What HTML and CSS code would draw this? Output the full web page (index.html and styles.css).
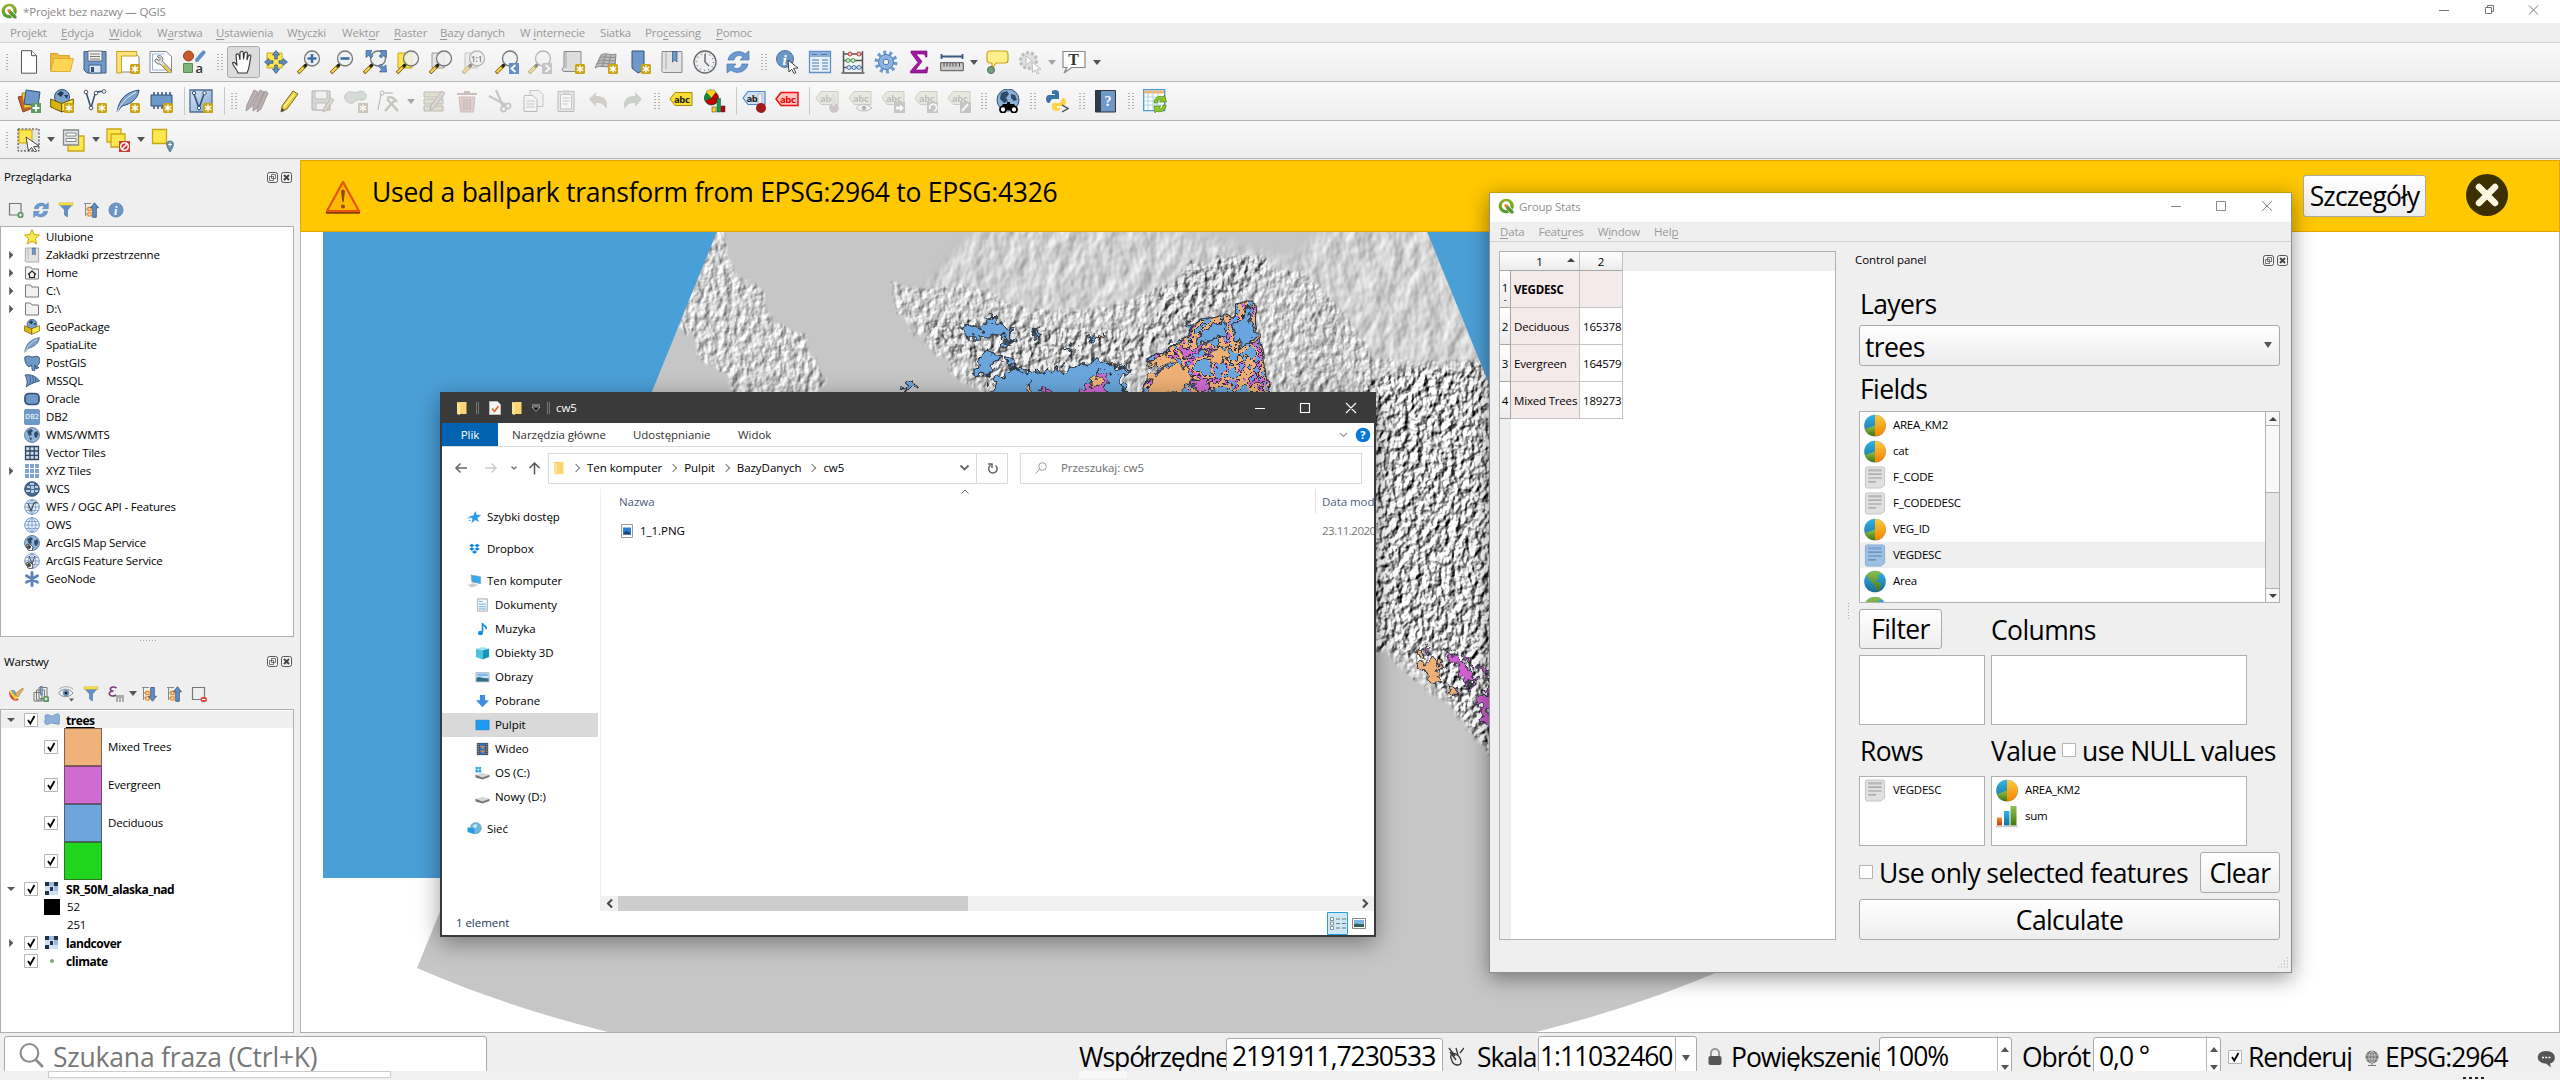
FILE: index.html
```html
<!DOCTYPE html>
<html lang="pl">
<head>
<meta charset="utf-8">
<title>*Projekt bez nazwy — QGIS</title>
<link rel="stylesheet" href="styles.css">
</head>
<body>
<svg class="defs" width="0" height="0" aria-hidden="true">
<defs>
<linearGradient id="gq" x1="0" y1="0" x2="0" y2="1"><stop offset="0" stop-color="#93b023"/><stop offset="1" stop-color="#4f9a2e"/></linearGradient>
<linearGradient id="gblue" x1="0" y1="0" x2="0" y2="1"><stop offset="0" stop-color="#31b5e6"/><stop offset="1" stop-color="#176b98"/></linearGradient>
<linearGradient id="gor" x1="0" y1="0" x2="0" y2="1"><stop offset="0" stop-color="#fccb3c"/><stop offset="1" stop-color="#f58200"/></linearGradient>
<linearGradient id="ggr" x1="0" y1="0" x2="0" y2="1"><stop offset="0" stop-color="#8ec04f"/><stop offset="1" stop-color="#45760f"/></linearGradient>
<linearGradient id="gred" x1="0" y1="0" x2="0" y2="1"><stop offset="0" stop-color="#f7902a"/><stop offset="1" stop-color="#c9370f"/></linearGradient>
<linearGradient id="gv" x1="0" y1="0" x2="1" y2="1"><stop offset="0" stop-color="#dbe7f4"/><stop offset="1" stop-color="#7fa5d2"/></linearGradient>

<g id="star"><rect x="14" y="14" width="10" height="10" rx="1.5" fill="#c9a514"/><path d="M19 15.500v7M15.800 17.200l6.400 3.600M22.200 17.200l-6.400 3.600" stroke="#fff" stroke-width="1.400"/></g>
<g id="lens"><path d="M1 23l8-8" stroke="#6b5300" stroke-width="3.600"/><path d="M1.600 22.400l5-5" stroke="#f6cf4a" stroke-width="2.200"/><path d="M7.500 16.500l3-3" stroke="#222" stroke-width="2.500"/><circle cx="15" cy="8.500" r="7.500" fill="#edf1ee" fill-opacity=".85" stroke="#777" stroke-width="1.300"/></g>
<g id="pencil"><path d="M15 2l5 3L9 20l-6 3 1-6z" fill="#e7cf3b" stroke="#7a6a18" stroke-width="1"/><path d="M17 4L6 18" stroke="#fff3a0" stroke-width="1.300"/><path d="M3 23l1-4 2.500 2z" fill="#444"/></g>
<g id="tag"><path d="M1 9l5-6.500h17v13H6z" /></g>
<g id="globe16"><circle cx="8" cy="8" r="7.500" fill="#8fb3d9" stroke="#4d6f96" stroke-width=".8"/><path d="M3 4l4-2 2 2-2 2 1 2-3 1zM10 6l3-2 1.500 3-2 4-2-1zM5 10l3 1-1 3z" fill="#2f4a6b"/></g>
<g id="grid16"><circle cx="8" cy="8" r="7.300" fill="#e8f0fa" stroke="#6e97c6" stroke-width="1"/><path d="M8 .7v14.600M.7 8h14.600M2 4.500h12M2 11.500h12M8 .7C3 5 3 11 8 15.300M8 .7c5 4.300 5 10.300 0 14.600" fill="none" stroke="#6e97c6" stroke-width=".8"/></g>

<symbol id="q" viewBox="0 0 16 16"><path d="M8 .8a7.200 7.200 0 1 0 3.200 13.600l-2.300-2.600A4.300 4.300 0 1 1 12.200 8.800l2.600 2.700A7.200 7.200 0 0 0 8 .8z" fill="url(#gq)"/><path d="M8 8l2.200-.3 5.300 5.400V15.500h-2.600L7.700 10z" fill="#589632"/><path d="M6.500 6.200l3 .3.500 1.500-2 1.500-1.500-1z" fill="#ee7913"/></symbol>
<symbol id="new" viewBox="0 0 24 24"><path d="M4.500 .7h10l5 5v17.500h-15z" fill="#fff" stroke="#555"/><path d="M14.500 .7v5h5" fill="#eee" stroke="#555"/></symbol>
<symbol id="open" viewBox="0 0 24 24"><path d="M.5 21V3.500h7l2 2h10V8" fill="#f3b938" stroke="#d8a32f"/><path d="M.7 21.500L4 8.500h19.500l-3.300 13z" fill="#fcd653" stroke="#dfae38"/></symbol>
<symbol id="save" viewBox="0 0 24 24"><path d="M1 1.500h22v21.500H4l-3-3z" fill="#6d98c8" stroke="#3d5f8a"/><path d="M5 1h14v10H5z" fill="#f2f2f2" stroke="#555" stroke-width=".8"/><path d="M7 4h10M7 6.500h10M7 9h10" stroke="#777"/><path d="M6 15h12v8H6z" fill="#dfe5ec" stroke="#3d5f8a"/><path d="M8 17h3v5H8z" fill="#31507a"/></symbol>
<symbol id="layout" viewBox="0 0 24 24"><path d="M5 2h13l5 5v15H5z" fill="#fff" stroke="#888"/><path d="M.7 1.500h20V6H5.500v17H.7z" fill="#fbe27a" stroke="#c7a019"/><use href="#star"/></symbol>
<symbol id="lmgr" viewBox="0 0 24 24"><path d="M1 1.500h16l5.500 5V22.500H1z" fill="#fff" stroke="#888"/><path d="M3.500 4v16h16M3.500 4h12" fill="none" stroke="#92b2dc"/><path d="M8 6.500c3-2.500 7 .5 5.500 4.500L22 20l-2 3-9-9c-4 .5-6-3-4-5.500l3 2 1.500-2z" fill="#ddd" stroke="#666" stroke-width=".9"/><path d="M15 14l7.500 7.500-2 2L13.500 16z" fill="#e5c544"/></symbol>
<symbol id="style" viewBox="0 0 24 24"><circle cx="6.500" cy="6" r="5" fill="#cb5a2a" stroke="#9b3e18"/><path d="M15 10l6.500-7.500" stroke="#5f8fc6" stroke-width="4" stroke-linecap="round"/><path d="M1.500 13.500h9v9h-9z" fill="#7fb27b" stroke="#5a8a55"/><text x="13.500" y="22.500" class="gl a">a</text></symbol>
<symbol id="hand" viewBox="0 0 24 24"><path d="M7 23c-1-4-5-7-5.500-10 1.500-1.500 3 0 4.500 2.500L5 5c1-2 3-1 3.300 1L9 10V2.500c1-2 3-1.500 3.200 0l.3 7 1-6.500c1-1.700 3-1 2.900.8L15.900 10l1.600-4.500c1-1.200 2.500-.5 2.300 1L18.500 14c-.5 4-1 6-2.500 9z" fill="#fff" stroke="#333" stroke-width="1.100"/></symbol>
<symbol id="pan" viewBox="0 0 24 24"><path d="M3 3h15v15H3z" fill="#fde74c" stroke="#c9a514" stroke-width="1"/><path d="M12 .5l3.500 4.500h-2.200v4h-2.600V5H8.500zM12 23.500l3.500-4.500h-2.200v-4h-2.600v4H8.500zM.5 12l4.500-3.500v2.200h4v2.600H5v2.200zM23.500 12L19 8.500v2.200h-4v2.600h4v2.200z" fill="#5f8fc6" stroke="#31507a" stroke-width=".7"/></symbol>
<symbol id="zin" viewBox="0 0 24 24"><use href="#lens"/><path d="M15 4v9M10.500 8.500h9" stroke="#3c6ea8" stroke-width="2.600"/></symbol>
<symbol id="zout" viewBox="0 0 24 24"><use href="#lens"/><path d="M10.500 8.500h9" stroke="#3c6ea8" stroke-width="2.600"/></symbol>
<symbol id="zfull" viewBox="0 0 24 24"><use href="#lens"/><path d="M3 .5h6L7.500 3 10 6 8 8 5.500 5.500 3 7.500zM23.500 .5v7L21 5.500 18 8l-2-2 2.500-2.500L17 .5zM23.500 22h-7l2-2.500-3-3.500 2-2 3 3 2.500-2z" fill="#5f8fc6" stroke="#31507a" stroke-width=".6"/></symbol>
<symbol id="zsel" viewBox="0 0 24 24"><path d="M2 3h14v15H2z" fill="#fde74c" stroke="#c9a514"/><use href="#lens"/></symbol>
<symbol id="zlay" viewBox="0 0 24 24"><path d="M3 3h12v15H3z" fill="#e4e4e4" stroke="#999"/><use href="#lens"/></symbol>
<symbol id="z11" viewBox="0 0 24 24"><use href="#zlay"/><text x="9" y="12" class="gl s7">1:1</text></symbol>
<symbol id="zprev" viewBox="0 0 24 24"><use href="#lens"/><path d="M14 13h10v11H14z" fill="#5f8fc6"/><path d="M20.500 15l-4 3.500 4 3.500" fill="none" stroke="#fff" stroke-width="1.800"/></symbol>
<symbol id="znext" viewBox="0 0 24 24"><use href="#lens"/><path d="M14 13h10v11H14z" fill="#999"/><path d="M17.500 15l4 3.500-4 3.500" fill="none" stroke="#fff" stroke-width="1.800"/></symbol>
<symbol id="nmap" viewBox="0 0 24 24"><path d="M3 1.500h17v20H3c-3-1-2-4 0-4z" fill="#ddd" stroke="#888"/><path d="M5 2v16" stroke="#aaa"/><use href="#star"/></symbol>
<symbol id="mesh" viewBox="0 0 24 24"><path d="M7 5c5-3 10 1 15-1l-1 12c-6 3-14-2-20 2z" fill="#bdbdbd" stroke="#888"/><path d="M4 11c7-3 11 2 18-1M5.500 8c6-3 10 1 16-1M2.500 14c6-3 12 2 19-1M12 4.500L8 17M17 5l-3 12" fill="none" stroke="#8a8a8a"/><use href="#star"/></symbol>
<symbol id="nbook" viewBox="0 0 24 24"><path d="M5 1h12v19l-6 3-6-5z" fill="#6d98c8" stroke="#31507a"/><use href="#star"/></symbol>
<symbol id="books" viewBox="0 0 24 24"><path d="M2 1.500h20v21H4c-3 0-2.500-3.500-2-4z" fill="#e3e3e3" stroke="#8a8a8a"/><path d="M6 2v17" stroke="#aaa"/><path d="M12.500 1.500h4.500V12l-2.200-2-2.300 2z" fill="#6d98c8" stroke="#31507a" stroke-width=".7"/></symbol>
<symbol id="clock" viewBox="0 0 24 24"><circle cx="12" cy="12" r="11" fill="#f0f0f0" stroke="#666" stroke-width="1.300"/><circle cx="12" cy="12" r="8.500" fill="none" stroke="#5f8fc6" stroke-width="1.500" stroke-dasharray="1 3.450"/><path d="M12 4v8l4 4" fill="none" stroke="#666" stroke-width="1.400"/></symbol>
<symbol id="refresh" viewBox="0 0 24 24"><path d="M2 10C3 2 14-1 19 4l4-3v9h-9l3-3c-4-3-8-1-9 3zM22 14c-1 8-12 11-17 6l-4 3v-9h9l-3 3c4 3 8 1 9-3z" fill="#6b9bd1" stroke="#4b78ad" stroke-width=".7"/></symbol>
<symbol id="ident" viewBox="0 0 24 24"><circle cx="10" cy="9" r="8.500" fill="#6b96c6" stroke="#4b78ad"/><text x="7.500" y="15" class="gl inf">i</text><path d="M13 10l10 8-4.500.3 2.500 4.200-2 1-2.300-4.300L14 22z" fill="#fff" stroke="#333" stroke-width=".9"/></symbol>
<symbol id="table" viewBox="0 0 24 24"><path d="M1.500 1.500h21v21h-21z" fill="#e9f0f8" stroke="#5f8fc6" stroke-width="1.300"/><path d="M2 2h20v5H2z" fill="#8cb0da"/><path d="M4 10h7M4 13h7M4 16h7M4 19h7M14 10h6M14 13h6M14 16h6M14 19h6M4 4.500h5M13 4.500h6" stroke="#4b78ad"/></symbol>
<symbol id="abacus" viewBox="0 0 24 24"><path d="M2.500 1v21M21.500 1v21M.5 23h23M2 4h20M2 10.500h20M2 17.500h20" stroke="#555" stroke-width="1.500"/><g fill="#f1c1c1" stroke="#c33"><circle cx="9" cy="4" r="2"/><circle cx="18" cy="4" r="2"/></g><g fill="#cde8cd" stroke="#4a9a4a"><circle cx="7" cy="10.500" r="2"/><circle cx="12" cy="10.500" r="2"/></g><g fill="#cfe0f3" stroke="#4b78ad"><circle cx="8" cy="17.500" r="2"/><circle cx="13" cy="17.500" r="2"/><circle cx="18" cy="17.500" r="2"/></g></symbol>
<symbol id="gear" viewBox="0 0 24 24"><circle cx="12" cy="12" r="9.500" fill="none" stroke="#6b9bd1" stroke-width="4" stroke-dasharray="3 2.970"/><circle cx="12" cy="12" r="7.500" fill="#8fb3e0" stroke="#4b78ad" stroke-width="1"/><circle cx="12" cy="12" r="2.800" fill="#f3f3f3" stroke="#4b78ad"/></symbol>
<symbol id="sigma" viewBox="0 0 24 24"><path d="M4 1h16v6h-1.500c-.5-2.500-1.500-3-4-3H9l6 7.500L8.500 20H16c2 0 3-1 3.500-3H21l-1 6H3.500v-2L11 12.500 4 3z" fill="#a01aa0" stroke="#770077" stroke-width=".6"/></symbol>
<symbol id="measure" viewBox="0 0 24 24"><path d="M1 6.500h22M1.500 4v5M22.500 4v5" stroke="#3d5a80" stroke-width="1.800"/><path d="M.7 12.700h22.600v8H.7z" fill="#c9c9c9" stroke="#555"/><path d="M4 13v3.500M7 13v3.500M10 13v3.500M13 13v3.500M16 13v3.500M19.500 13v3.500" stroke="#444"/></symbol>
<symbol id="tip" viewBox="0 0 24 24"><path d="M5 1h15a3 3 0 0 1 3 3v6a3 3 0 0 1-3 3h-9l-4 6v-6H5a3 3 0 0 1-3-3V4a3 3 0 0 1 3-3z" fill="#fbf08b" stroke="#c9a514" stroke-width="1.200"/><circle cx="6" cy="20" r="3.500" fill="#6fa36f" stroke="#567"/></symbol>
<symbol id="action" viewBox="0 0 24 24"><circle cx="10.500" cy="10.500" r="8" fill="#ccc" stroke="#888" stroke-width="3" stroke-dasharray="3 2"/><path d="M8 6l6 4.500-6 4.500z" fill="#fff" stroke="#888"/><path d="M14 12l9 7-4 .3 2 4-1.500.7-2.500-4-2.500 2.500z" fill="#fff" stroke="#888"/></symbol>
<symbol id="text" viewBox="0 0 24 24"><path d="M1 1.500h22v16H9.500L2 23l3-5.500H1z" fill="#fff" stroke="#888" stroke-width="1.200"/><text x="6.300" y="15" class="gl tt">T</text></symbol>

<symbol id="dsrc" viewBox="0 0 24 24"><path d="M1 8l13-3 4 13-12 5z" fill="#cb5a2a" stroke="#93401b"/><path d="M5 4l13 0 1 14-12 1z" fill="#f4c62e" stroke="#b08a12"/><path d="M9 1l14 2-2 14-14-2z" fill="#6d98c8" stroke="#31507a"/><path d="M14 14h10v10H14z" fill="#5c9a65"/><path d="M19 15.500v7M15.500 19h7" stroke="#fff" stroke-width="1.800"/></symbol>
<symbol id="gpkg" viewBox="0 0 24 24"><circle cx="12" cy="8" r="7.500" fill="#7da3cd" stroke="#31507a"/><path d="M7 5l4-3 3 2-3 4zM14 6l4 0-1 4z" fill="#263a55"/><path d="M.7 10l11 4.500V23L.7 18z" fill="#d8b50f" stroke="#6b5300"/><path d="M11.700 14.500L23.300 10v8l-11.600 5z" fill="#fbe84d" stroke="#6b5300"/></symbol>
<symbol id="gpkgn" viewBox="0 0 24 24"><use href="#gpkg"/><use href="#star"/></symbol>
<symbol id="vnew" viewBox="0 0 24 24"><path d="M3 3l5 16 4-14c2-3 6-2 9-3" fill="none" stroke="#31507a" stroke-width="1.500"/><g fill="#fff" stroke="#555"><circle cx="3" cy="3" r="1.800"/><circle cx="8" cy="19" r="1.800"/><circle cx="13" cy="4" r="1.800"/><circle cx="21" cy="2.500" r="1.800"/></g><use href="#star"/></symbol>
<symbol id="feather" viewBox="0 0 24 24"><path d="M1 23C3 10 10 3 23 1c-1 9-8 14-17 16z" fill="#7da3cd" stroke="#31507a"/><path d="M1 23C5 14 12 7 20 3" fill="none" stroke="#e7eef6"/></symbol>
<symbol id="spn" viewBox="0 0 24 24"><use href="#feather"/><use href="#star"/></symbol>
<symbol id="chip" viewBox="0 0 24 24"><path d="M5 3v17M9 3v17M13 3v17M17 3v17M21 3v17" stroke="#31507a" stroke-width="1.500"/><path d="M2 6h21v11H2z" fill="#6d98c8" stroke="#31507a"/><use href="#star"/></symbol>
<symbol id="vbox" viewBox="0 0 24 24"><path d="M1 1h22v22H1z" fill="url(#gv)" stroke="#4b6c94" stroke-width="1.300"/><path d="M5 5l5 14 5-14" fill="none" stroke="#31507a" stroke-width="1.600"/><g fill="#fff" stroke="#31507a"><circle cx="5" cy="4" r="1.700"/><circle cx="10" cy="19" r="1.700"/><circle cx="15.500" cy="4" r="1.700"/></g><use href="#star"/></symbol>
<symbol id="pencils" viewBox="0 0 24 24"><path d="M9 1l4 2L6 18l-5 4 1-6zM15 1l4 2-7 16-4 3v-5zM20 2l3 2-7 16-4 3 1-5z" fill="#a89898" stroke="#857a7a"/></symbol>
<symbol id="pen" viewBox="0 0 24 24"><use href="#pencil"/></symbol>
<symbol id="savee" viewBox="0 0 24 24"><path d="M1 2h18v19H1z" fill="#bbb" stroke="#777"/><path d="M4 2h12v8H4zM5 14h10v7H5z" fill="#eee" stroke="#888"/><path d="M20 9l3 2-7 10-4 2 1-4z" fill="#c9b9a9" stroke="#887"/></symbol>
<symbol id="addp" viewBox="0 0 24 24"><path d="M2 5c4-5 8 0 12-2s9 0 8 5-6 2-9 3-3 4-7 3-7-5-4-9z" fill="#b9c2b9" stroke="#8a938a"/><path d="M14 14h10v10H14z" fill="#a59c7c"/><path d="M19 15.500v7M15.800 17.200l6.400 3.600M22.200 17.200l-6.400 3.600" stroke="#fff" stroke-width="1.400"/></symbol>
<symbol id="vtx" viewBox="0 0 24 24"><path d="M4 5L1 21M6 4h10" fill="none" stroke="#777"/><circle cx="5" cy="4" r="2" fill="#fff" stroke="#777"/><path d="M8 22l10-11M10 9c4-2 7 0 10 4M10 10l11 12" stroke="#9a9a8a" stroke-width="2.500" fill="none"/></symbol>
<symbol id="attr" viewBox="0 0 24 24"><path d="M2 3h19v5H2zM2 10h19v5H2zM2 17h19v5H2z" fill="#c9c9b0" stroke="#888870"/><path d="M20 2l3 2-11 15-4 2 1-5z" fill="#c9b9b9" stroke="#877"/></symbol>
<symbol id="trash" viewBox="0 0 24 24"><path d="M4 8h16l-1.500 15h-13z" fill="#caa" stroke="#a88"/><path d="M2 5h20M9 3h6M9 10v11M12 10v11M15 10v11" stroke="#a88" stroke-width="1.800"/></symbol>
<symbol id="cut" viewBox="0 0 24 24"><path d="M1 7l17 9M8 1l7 16" stroke="#999" stroke-width="2.200"/><circle cx="20" cy="17" r="2.600" fill="none" stroke="#999" stroke-width="1.600"/><circle cx="15.500" cy="20" r="2.600" fill="none" stroke="#999" stroke-width="1.600"/></symbol>
<symbol id="copy" viewBox="0 0 24 24"><path d="M9 1.500h9l4 4v12H9z" fill="#eee" stroke="#999"/><path d="M3 6.500h9l4 4v12H3z" fill="#f4f4f4" stroke="#888"/><path d="M5.500 12h8M5.500 15h8M5.500 18h8" stroke="#999"/></symbol>
<symbol id="paste" viewBox="0 0 24 24"><path d="M4 2.500h16v20H4z" fill="#ddd" stroke="#888"/><path d="M6.500 5.500h11v14.500h-11z" fill="#fafafa" stroke="#999"/><path d="M9 1h6v4H9z" fill="#bbb"/><path d="M8.500 9h7M8.500 12h7M8.500 15h5" stroke="#999"/></symbol>
<symbol id="undo" viewBox="0 0 24 24"><path d="M2 10l7-7v4c9-1 13 6 10 13-2-5-5-6-10-6v4z" fill="#b3a89c"/></symbol>
<symbol id="redo" viewBox="0 0 24 24"><path d="M22 10l-7-7v4C6 6 2 13 5 20c2-5 5-6 10-6v4z" fill="#a3ada3"/></symbol>
<symbol id="abc" viewBox="0 0 24 24"><use href="#tag" y="1" fill="#f9de32" stroke="#a8890c" stroke-width="1"/><text x="5" y="13.500" class="gl abc">abc</text></symbol>
<symbol id="diag" viewBox="0 0 24 24"><circle cx="9.500" cy="9" r="7" fill="#c00000" stroke="#333" stroke-width=".8"/><path d="M9.500 9V2A7 7 0 0 0 3 12z" fill="#0a8a3a"/><path d="M9.500 9L4 3c2-3 8-3 10 0z" fill="#ffd21c" stroke="#333" stroke-width=".4"/><path d="M10 18h4v5h-4z" fill="#ffd21c" stroke="#333" stroke-width=".5"/><path d="M15 9.500h3.500V23H15z" fill="#0aa04a" stroke="#333" stroke-width=".5"/><path d="M19 17h4v6h-4z" fill="#c00000" stroke="#333" stroke-width=".5"/></symbol>
<symbol id="abblue" viewBox="0 0 24 24"><use href="#tag" fill="#cfe0f5" stroke="#4b86cc" stroke-width="1.200"/><text x="4.500" y="12.500" class="gl abc">ab</text><path d="M16 5h4v13h-4z" fill="#eee" stroke="#888" stroke-width=".5"/><circle cx="19" cy="19" r="5" fill="#9e1c1c"/></symbol>
<symbol id="abred" viewBox="0 0 24 24"><use href="#tag" y="1" fill="#ffc3c3" stroke="#e11" stroke-width="1.500"/><text x="5" y="13.500" class="gl abc red">abc</text></symbol>
<symbol id="abg" viewBox="0 0 24 24"><use href="#tag" fill="#dcdccc" stroke="#a5a595" stroke-width="1"/><text x="5" y="12.500" class="gl abc gr">abc</text></symbol>
<symbol id="abg1" viewBox="0 0 24 24"><use href="#abg"/><circle cx="19" cy="19" r="4.800" fill="#a99"/><path d="M17 5h3v12h-3z" fill="#ccc"/></symbol>
<symbol id="abg2" viewBox="0 0 24 24"><use href="#abg"/><path d="M8 19c4-5 11-5 16 0-5 4-12 4-16 0z" fill="#eee" stroke="#888"/><circle cx="16" cy="19" r="2.200" fill="#777"/></symbol>
<symbol id="abg3" viewBox="0 0 24 24"><use href="#abg"/><path d="M13 13h11v11H13z" fill="#999"/><path d="M15 17.500h4v-2l4 3.500-4 3.500v-2h-4z" fill="#fff"/></symbol>
<symbol id="abg4" viewBox="0 0 24 24"><use href="#abg"/><path d="M13 13h11v11H13z" fill="#999"/><path d="M20 22a3.500 3.500 0 1 0-4-2" fill="none" stroke="#fff" stroke-width="1.800"/></symbol>
<symbol id="abg5" viewBox="0 0 24 24"><use href="#abg"/><path d="M13 13h11v11H13z" fill="#999"/><path d="M15 22l6-7" stroke="#fff" stroke-width="2"/></symbol>
<symbol id="bino" viewBox="0 0 24 24"><circle cx="12" cy="11" r="11" fill="#8fb0d6" stroke="#31507a"/><path d="M5 4l6-2 2 3-3 4 2 3-4 2-4-4zM15 5l4 1 2 5-3 1-3-3z" fill="#2f4a6b"/><path d="M7 15h4v-2h3v2h4l4 6H3z" fill="#000"/><circle cx="7" cy="20.500" r="3" fill="#fff" stroke="#000" stroke-width="1.700"/><circle cx="18" cy="20.500" r="3" fill="#fff" stroke="#000" stroke-width="1.700"/></symbol>
<symbol id="py" viewBox="0 0 24 24"><path d="M7 2c3-2 7-1 7 2v6H8c-3 0-2 4-4 4-4 0-4-8 0-8h6V5H7z" fill="#3a72a8"/><path d="M15 21c-3 2-8 1-8-2v-5h7c3 0 2-5 4-5 4 0 4 8 0 8h-6v2h3z" fill="#ffd343"/><path d="M17 16l6 3.500-6 3.500" fill="none" stroke="#444" stroke-width="1.300"/></symbol>
<symbol id="help" viewBox="0 0 24 24"><path d="M1.500 1.500h20v21.500h-20z" fill="#6d98c8" stroke="#333"/><path d="M1.500 1.500H7V23H1.500z" fill="#2f3b4a"/><text x="10.500" y="16.500" class="gl qm">?</text></symbol>
<symbol id="gstat" viewBox="0 0 24 24"><path d="M.7 .7h21v21H.7z" fill="#fff" stroke="#4b9ad0" stroke-width="1.300"/><path d="M1 3h20" stroke="#f4b469" stroke-width="3"/><path d="M5 1v20M10 1v20M15 1v20M1 8h20M1 12h20M1 16h20" stroke="#a7cdea" stroke-width=".9"/><path d="M11 14c0-6 6-8 9-6l1.500-2 2 7h-7l2-2c-2-1-4 0-4 3zM23 16c0 6-6 8-9 6l-2 2-1-7h7l-2 2c2 1 4 0 4-3z" fill="#8fc72a" stroke="#4f8a10" stroke-width=".7"/></symbol>
<symbol id="sel" viewBox="0 0 24 24"><path d="M1 1h21v22H1z" fill="#e4e4e4" stroke="#333" stroke-dasharray="2 1.500"/><path d="M2 2h13v13H2z" fill="#fde74c" stroke="#c9a514"/><path d="M9 9l13 9-5.500.8 3 4-2 1.200-3-4.500-3 3.500z" fill="#fff" stroke="#333" stroke-width=".9"/></symbol>
<symbol id="selv" viewBox="0 0 24 24"><path d="M6 8h16v15H6z" fill="#fde74c" stroke="#c9a514" stroke-width="1.300"/><path d="M1.500 2h15v15h-15z" fill="#dfe5ea" stroke="#888" stroke-width="1.300"/><path d="M4 5h10v3H4zM4 10.500h10v3H4z" fill="#fff" stroke="#888"/></symbol>
<symbol id="desel" viewBox="0 0 24 24"><path d="M1 1h14v13H1z" fill="#fde74c" stroke="#c9a514" stroke-width="1.300"/><path d="M5 6h14v13H5z" fill="#fde74c" stroke="#c9a514" stroke-width="1.300"/><path d="M13 13h11v11H13z" fill="#d83a3a"/><circle cx="18.500" cy="18.500" r="3.800" fill="none" stroke="#fff" stroke-width="1.500"/><path d="M16 21l5-5" stroke="#fff" stroke-width="1.500"/></symbol>
<symbol id="selloc" viewBox="0 0 24 24"><path d="M1.500 1.500h14v14h-14z" fill="#fde74c" stroke="#c9a514" stroke-width="1.300"/><path d="M19 24c-5-7-4-11 0-11s5 4 0 11z" fill="#6b8fa8" stroke="#44637a" stroke-width=".7"/><path d="M19 14.500v4M17 16.500h4" stroke="#fff"/></symbol>

<symbol id="flt" viewBox="0 0 16 16"><path d="M1 2h14l-5.500 6v7l-3-2V8z" fill="#5f8fc6" stroke="#4b78ad" stroke-width=".6"/><path d="M1 .8h14v2.400H1z" fill="#fbe84d" stroke="#c9a514" stroke-width=".5"/></symbol>
<symbol id="addl" viewBox="0 0 16 16"><path d="M1.500 1.500h11.500v11.500H1.500z" fill="#efefef" stroke="#777" stroke-width="1.200"/><rect x="9.500" y="10" width="6" height="6" rx="2" fill="#5c9a65"/><path d="M11 13h3M12.500 11.500v3" stroke="#fff"/></symbol>
<symbol id="reml" viewBox="0 0 16 16"><path d="M1.500 1.500h12v12h-12z" fill="#efefef" stroke="#777" stroke-width="1.200"/><rect x="9.500" y="11" width="6.500" height="5" rx="2" fill="#e04848"/><path d="M11 13.500h3.500" stroke="#fff"/></symbol>
<symbol id="coll" viewBox="0 0 16 16"><path d="M1 1.500h7M2.500 2v12M2.500 7h3M2.500 12h3" stroke="#888" fill="none"/><path d="M5 5.500h3v3H5zM5 10.800h3v3H5z" fill="#fff" stroke="#f08a1c" stroke-width="1.300"/><path d="M11.500 .8l4 5h-2.200v9.500H9.700V5.800H7.500z" fill="#5f8fc6" stroke="#31507a" stroke-width=".8"/></symbol>
<symbol id="expa" viewBox="0 0 16 16"><path d="M1 1.500h7M2.500 2v12M2.500 7h3M2.500 12h3" stroke="#888" fill="none"/><path d="M5 5.500h3v3H5zM5 10.800h3v3H5z" fill="#fff" stroke="#f08a1c" stroke-width="1.300"/><path d="M11.500 15.200l4-5h-2.200V1.500H9.700v8.700H7.500z" fill="#5f8fc6" stroke="#31507a" stroke-width=".8"/></symbol>
<symbol id="info" viewBox="0 0 16 16"><circle cx="8" cy="8" r="7" fill="#6b96c6" stroke="#5b86b6"/><text x="6" y="12.500" class="gl inf2">i</text></symbol>
<symbol id="brush" viewBox="0 0 16 16"><path d="M1 5l5 7 5 1c-1 2-4 2-6 1C2 12 1 9 1 5z" fill="#e04040"/><path d="M1 5l5-1 5 6-4 4z" fill="#f6d23a"/><path d="M3 4l3 0 3 4-2 2z" fill="#6b9bd1"/><path d="M7 8l7.500-6 1 1L10 11z" fill="#e2b06a" stroke="#a9793a" stroke-width=".6"/></symbol>
<symbol id="addgr" viewBox="0 0 16 16"><path d="M6 1.500h8v11H6zM3.500 4h8v10h-8zM1 6.500h8V15H1z" fill="#efefef" stroke="#777"/><path d="M7.500 0h1.800v9H7.500z" fill="#8fb0d6" stroke="#31507a" stroke-width=".5"/><rect x="10" y="10" width="6" height="6" rx="1.500" fill="#5c9a65"/><path d="M11.500 13h3M13 11.500v3" stroke="#fff"/></symbol>
<symbol id="eye" viewBox="0 0 16 16"><path d="M.5 7C4 2 11 2 15 7c-4 5-11 5-14.500 0z" fill="#f2f2f2" stroke="#888"/><circle cx="8" cy="7" r="3.300" fill="#6d98c8"/><circle cx="8" cy="7" r="1.500" fill="#222"/><path d="M1 3C5 0 11 0 15 3" fill="none" stroke="#aaa"/><path d="M11 12.500h5l-2.500 3z" fill="#555"/></symbol>
<symbol id="eps" viewBox="0 0 16 16"><path d="M8.500 2C5.500 0 1.500 1.500 2.500 3.800c.7 1 1.700 1.200 3 1.200C2.500 5 .7 6.500 1.500 8.500s4.500 2 6.500.5" fill="none" stroke="#7a3a7a" stroke-width="1.600"/><path d="M8 9h8v7h-2v-4h-1v4h-2v-4h-1v4H8z" fill="#aaa"/></symbol>

<symbol id="tstar" viewBox="0 0 16 16"><path d="M8 .5l2.200 5 5.300.5-4 3.600 1.200 5.400L8 12.200 3.300 15l1.200-5.400L.5 6l5.300-.5z" fill="#fbe84d" stroke="#c9a514"/></symbol>
<symbol id="thome" viewBox="0 0 16 16"><path d="M1.500 2h5l1.500 2h6.500v10h-13z" fill="#f1f1f1" stroke="#777"/><path d="M4 9.500L8 6l4 3.500M5.500 9v3.500h5V9" fill="none" stroke="#222" stroke-width="1.100"/></symbol>
<symbol id="tfold" viewBox="0 0 16 16"><path d="M1.500 2h5l1.500 2h6.500v10h-13z" fill="#f1f1f1" stroke="#777"/></symbol>
<symbol id="tpg" viewBox="0 0 16 16"><path d="M1 2c4-2 6 0 7 0s6-2 7.500 1-1 7-2.500 8v1l2 .5-3 1.500-1-4c0 3 0 6-1.500 6S8 14 7.500 10L5 12C3 11 0 6 1 2z" fill="#6d98c8" stroke="#31507a"/></symbol>
<symbol id="tms" viewBox="0 0 16 16"><path d="M1 2c6-1 11 1 14.500 6C11 9 6 11 2 14c2-4 1-8-1-12z" fill="#6d98c8" stroke="#3f5f86"/><path d="M5 2c2 3 2 7 0 10M8 3c2 3 2 5 0 8M11 4.500c1 2 1 3 0 5" fill="none" stroke="#31507a" stroke-width=".7"/></symbol>
<symbol id="tora" viewBox="0 0 16 16"><rect x="1" y="2.500" width="14" height="11" rx="4" fill="#6d98c8" stroke="#31507a" stroke-width="1.700"/></symbol>
<symbol id="tdb2" viewBox="0 0 16 16"><rect width="16" height="16" rx="2" fill="#6d98c8"/><text x="1" y="10" class="gl db">DB2</text></symbol>
<symbol id="tglobe" viewBox="0 0 16 16"><use href="#globe16"/></symbol>
<symbol id="tvt" viewBox="0 0 16 16"><path d="M1 1h14v14H1z" fill="#cdd9e8"/><path d="M1.500 1v14M6 1v14M10.300 1v14M14.500 1v14M1 1.500h14M1 6h14M1 10.300h14M1 14.500h14" stroke="#2f4666" stroke-width="1.300"/></symbol>
<symbol id="txyz" viewBox="0 0 16 16"><path d="M1 1h4v4H1zM6 1h4v4H6zM11 1h4v4h-4zM1 6h4v4H1zM6 6h4v4H6zM11 6h4v4h-4zM1 11h4v4H1zM6 11h4v4H6zM11 11h4v4h-4z" fill="#7fa5d2"/></symbol>
<symbol id="twcs" viewBox="0 0 16 16"><circle cx="8" cy="8" r="7.300" fill="#48688f" stroke="#31507a"/><path d="M3 5h3v2H3zM7 5h3v3H7zM11 5h3v2h-3zM2 9h4v2H2zM7 9h3v3H7zM11 9h3v2h-3zM6 2h4v2H6z" fill="#b9cfe8"/></symbol>
<symbol id="twfs" viewBox="0 0 16 16"><use href="#grid16"/><path d="M4 4l3 8 3-8 3-1" fill="none" stroke="#444" stroke-width="1.100"/></symbol>
<symbol id="tows" viewBox="0 0 16 16"><use href="#grid16"/></symbol>
<symbol id="tarc" viewBox="0 0 16 16"><use href="#globe16"/><path d="M2 10l4-1 3 3-1 4-4-1z" fill="#fff" stroke="#333" stroke-width=".8"/><circle cx="5" cy="12" r="2" fill="#444"/></symbol>
<symbol id="tarf" viewBox="0 0 16 16"><use href="#grid16"/><path d="M5 3l3 8 3-8" fill="none" stroke="#444"/><path d="M2 10l4-1 3 3-1 4-4-1z" fill="#fff" stroke="#333" stroke-width=".8"/><circle cx="5" cy="12" r="2" fill="#444"/></symbol>
<symbol id="tgn" viewBox="0 0 16 16"><path d="M8 1.500v13M2.500 4.800l11 6.400M13.500 4.800l-11 6.400" stroke="#5f87b6" stroke-width="3" stroke-linecap="round"/></symbol>
<symbol id="poly" viewBox="0 0 16 16"><path d="M.7 4c3-3 5.300 0 7.300 0s4.500-3.500 7-1.500-.5 5.500.3 8.500-6-.5-8 0-5.300 3-6.300 0 1.700-4-.3-7z" fill="#8fb0d6" stroke="#6d98c8"/></symbol>
<symbol id="rast" viewBox="0 0 14 14"><path d="M0 0h13v13H0z" fill="#cfe0f2"/><path d="M0 0h4v4H0zM9 0h4v4H9zM5 5h3v4H5zM0 9h4v4H0z" fill="#22324a"/><path d="M4 0h5v4H4zM9 4h4v5H9z" fill="#9db9dc"/></symbol>
<symbol id="chk" viewBox="0 0 14 14"><path d="M.5 .5h13v13H.5z" fill="#fff" stroke="#b5b5b5"/><path d="M4 7l2.300 3.500L10.500 3" fill="none" stroke="#000" stroke-width="1.800"/></symbol>
<symbol id="box" viewBox="0 0 14 14"><path d="M.5 .5h13v13H.5z" fill="#fff" stroke="#b5b5b5"/></symbol>
<symbol id="right" viewBox="0 0 16 16"><path d="M6.500 4.500l3.500 3.500-3.500 3.500z" fill="#555" stroke="#777"/></symbol>
<symbol id="down" viewBox="0 0 16 16"><path d="M4 6h8l-4 4z" fill="#555"/></symbol>
<symbol id="flo" viewBox="0 0 11 11"><rect x=".5" y=".5" width="10" height="10" rx="2" fill="#f3f3f3" stroke="#555"/><path d="M4.500 2.500h4v4h-4zM2.500 4.500h4v4h-4z" fill="#f3f3f3" stroke="#555" stroke-width=".8"/></symbol>
<symbol id="clo" viewBox="0 0 11 11"><rect x=".5" y=".5" width="10" height="10" rx="2" fill="#f3f3f3" stroke="#555"/><path d="M3 3l5 5M8 3l-5 5" stroke="#444" stroke-width="1.900"/></symbol>

<symbol id="pie" viewBox="0 0 22 22"><circle cx="11" cy="11" r="10.800" fill="url(#gblue)"/><path d="M11 11L.8 14.500A10.800 10.800 0 0 0 11 21.800z" fill="url(#ggr)"/><path d="M11 .2a10.800 10.800 0 0 1 0 21.600z" fill="url(#gor)"/></symbol>
<symbol id="doc" viewBox="0 0 22 24"><path d="M3 1h16a2 2 0 0 1 2 2v17l-4 3H3a2 2 0 0 1-2-2V3a2 2 0 0 1 2-2z" fill="#e0e0e0" stroke="#c2c2c2"/><path d="M4 4.500h14" stroke="#b7b7b7" stroke-width="2.500"/><path d="M4 8.500h14M4 12.500h14M4 16.500h8" stroke="#9a9a9a" stroke-width="1.200"/></symbol>
<symbol id="docb" viewBox="0 0 22 24"><path d="M3 1h16a2 2 0 0 1 2 2v17l-4 3H3a2 2 0 0 1-2-2V3a2 2 0 0 1 2-2z" fill="#9cc1e4" stroke="#86aed4"/><path d="M4 4.500h14" stroke="#7ba5cf" stroke-width="2.500"/><path d="M4 8.500h14M4 12.500h14M4 16.500h8" stroke="#5d87b0" stroke-width="1.200"/></symbol>
<symbol id="earth" viewBox="0 0 22 22"><circle cx="11" cy="11" r="10.800" fill="url(#gblue)"/><path d="M2 5C6 0 14-1 18 3l-5 2 2 3-4 3 5 1 1 3-3 6-2-1-1-5-4-4-3-4z" fill="url(#ggr)"/></symbol>
<symbol id="bars" viewBox="0 0 22 22"><path d="M1 12h5v8H1z" fill="url(#gred)"/><path d="M8 5.500h5.500V20H8z" fill="url(#gblue)"/><path d="M14.500 .5h6V20h-6z" fill="url(#ggr)"/><path d="M0 21h22" stroke="#ccc" stroke-width="1.500"/></symbol>

<symbol id="fold" viewBox="0 0 12 14"><path d="M1 1h7v12H1z" fill="#e8b84c"/><path d="M1 1l3 1.500V14l-3-1z" fill="#fbe39a"/><path d="M4 1h6.500v12H4z" fill="#fbd670"/></symbol>
<symbol id="eqs" viewBox="0 0 16 16"><path d="M9 1l1.500 4.500 5 .3-4 3.200 1.300 5L9 11.500 4.500 15l1.200-5L1.500 7l5-.8z" fill="#2f9de8"/><path d="M0 9h4M1 12h3" stroke="#7cc3f2" stroke-width="1.300"/></symbol>
<symbol id="edb" viewBox="0 0 16 16"><path d="M5 2l3 2-3 2-3-2zM11 2l3 2-3 2-3-2zM5 6l3 2-3 2-3-2zM11 6l3 2-3 2-3-2zM8 9.500l3 2-3 2-3-2z" fill="#1081de"/></symbol>
<symbol id="epc" viewBox="0 0 16 16"><path d="M4 1l11 2v8L5 9z" fill="#38a7ec" stroke="#8c9aa5" stroke-width=".7"/><path d="M0 12.500l7-2 5 2-7 3z" fill="#c9ced3"/></symbol>
<symbol id="edoc" viewBox="0 0 16 16"><path d="M2.500 1h11v14h-11z" fill="#f4f6f8" stroke="#9aa5ae"/><path d="M4 4h4M4 7h8M4 10h8M4 12.500h8" stroke="#5aa7d8"/></symbol>
<symbol id="emus" viewBox="0 0 16 16"><path d="M8 1v10M8 2c1 3 5 2 4 6" fill="none" stroke="#1790e8" stroke-width="1.900"/><ellipse cx="5.700" cy="12.500" rx="3" ry="2.500" fill="#1790e8"/></symbol>
<symbol id="e3d" viewBox="0 0 16 16"><path d="M.5 3L8 1l7.500 2L8 5z" fill="#9fe2ee"/><path d="M.5 3L8 5v10.500L.5 12.500z" fill="#4cc5dd"/><path d="M15.500 3L8 5v10.500l7.500-3z" fill="#1397b8"/></symbol>
<symbol id="epic" viewBox="0 0 16 16"><path d="M.5 3h15v10.500H.5z" fill="#cfe6f8" stroke="#a9b4bd"/><path d="M1 9c4-3 8 2 14 0v4H1z" fill="#2f6f86"/><path d="M2 4h12v3H2z" fill="#7db8ee"/></symbol>
<symbol id="edl" viewBox="0 0 16 16"><path d="M5 1h6v6h4.500L8 15 .5 7H5z" fill="#3e8fdf"/></symbol>
<symbol id="edk" viewBox="0 0 16 16"><path d="M.5 2.500h15v11H.5z" fill="#1b9bf2" stroke="#1579c4" stroke-width=".7"/></symbol>
<symbol id="evid" viewBox="0 0 16 16"><path d="M1.500 1h13v14h-13z" fill="#444"/><path d="M4.500 1.500h7v13h-7z" fill="#2f72c4"/><path d="M5 4l6 1-3 3zM5 10l6-1-2 4z" fill="#d98a3a"/><path d="M3 2v12M13 2v12" stroke="#ddd" stroke-dasharray="1.300 1.300"/></symbol>
<symbol id="eosc" viewBox="0 0 16 16"><path d="M0 1h3v3H0zM3.500 1h3v3h-3zM0 4.500h3v3H0zM3.500 4.500h3v3h-3z" fill="#28a8ea"/><path d="M0 10l8-2 8 2-8 3z" fill="#d7d7d7"/><path d="M0 10l8 3 8-3v2.500L8 15.500 0 13z" fill="#777"/></symbol>
<symbol id="edrv" viewBox="0 0 16 16"><path d="M0 10l8-2 8 2-8 3z" fill="#d7d7d7"/><path d="M0 10l8 3 8-3v2.500L8 15.500 0 13z" fill="#777"/></symbol>
<symbol id="enet" viewBox="0 0 16 16"><circle cx="9.500" cy="7" r="6.300" fill="#6fb8dc" stroke="#4c8fb5" stroke-width=".6"/><path d="M6 4l4-2 1 3-3 2z" fill="#cfe9f5"/><path d="M0 6l8 1.500V14L0 11.500z" fill="#2b9be6"/></symbol>

<filter id="reliefHard" x="0" y="0" width="100%" height="100%" color-interpolation-filters="sRGB">
<feTurbulence type="fractalNoise" baseFrequency=".15 .12" numOctaves="3" seed="7" result="n"/>
<feDiffuseLighting in="n" surfaceScale="3.800" diffuseConstant="1.160" lighting-color="#fff" result="l"><feDistantLight azimuth="215" elevation="45"/></feDiffuseLighting>
<feTurbulence type="fractalNoise" baseFrequency=".06" numOctaves="3" seed="3" result="w"/>
<feDisplacementMap in="SourceAlpha" in2="w" scale="22" xChannelSelector="R" yChannelSelector="G" result="a"/>
<feGaussianBlur in="a" stdDeviation="2" result="b"/>
<feComposite in="l" in2="b" operator="in"/>
</filter>
<filter id="reliefMid" x="0" y="0" width="100%" height="100%" color-interpolation-filters="sRGB">
<feTurbulence type="fractalNoise" baseFrequency=".14 .1" numOctaves="3" seed="11" result="n"/>
<feDiffuseLighting in="n" surfaceScale="1.600" diffuseConstant="1.150" lighting-color="#fff" result="l"><feDistantLight azimuth="215" elevation="45"/></feDiffuseLighting>
<feTurbulence type="fractalNoise" baseFrequency=".06" numOctaves="3" seed="3" result="w"/>
<feDisplacementMap in="SourceAlpha" in2="w" scale="16" xChannelSelector="R" yChannelSelector="G" result="a"/>
<feGaussianBlur in="a" stdDeviation="1" result="b"/>
<feComposite in="l" in2="b" operator="in"/>
</filter>
<filter id="reliefSoft" x="0" y="0" width="100%" height="100%" color-interpolation-filters="sRGB">
<feTurbulence type="fractalNoise" baseFrequency=".06 .04" numOctaves="3" seed="5" result="n"/>
<feDiffuseLighting in="n" surfaceScale="1.300" diffuseConstant="1.160" lighting-color="#fff" result="l"><feDistantLight azimuth="215" elevation="45"/></feDiffuseLighting>
<feGaussianBlur in="SourceAlpha" stdDeviation="6" result="b"/>
<feComposite in="l" in2="b" operator="in"/>
</filter>
<filter id="rough" x="-10%" y="-10%" width="120%" height="120%">
<feTurbulence type="fractalNoise" baseFrequency=".13" numOctaves="2" seed="8" result="w"/>
<feDisplacementMap in="SourceGraphic" in2="w" scale="18" xChannelSelector="R" yChannelSelector="G"/>
</filter>
<filter id="veg" x="-5%" y="-5%" width="110%" height="110%" color-interpolation-filters="sRGB">
<feTurbulence type="fractalNoise" baseFrequency=".075" numOctaves="3" seed="21" result="n"/>
<feColorMatrix in="n" values="1 0 0 0 0 1 0 0 0 0 1 0 0 0 0 0 0 0 0 1" result="m"/>
<feComponentTransfer in="m" result="c">
<feFuncR type="discrete" tableValues=".42 .42 .42 .42 .42 .42 .42 .42 .42 .42 .42 .42 .42 .42 .42 .42 .42 .2 .93 .93 .93 .93 .2 .82 .82 .2 .42 .42 .42 .42 .42 .42 .42 .42 .42 .42 .42 .42 .42 .42"/>
<feFuncG type="discrete" tableValues=".65 .65 .65 .65 .65 .65 .65 .65 .65 .65 .65 .65 .65 .65 .65 .65 .65 .2 .69 .69 .69 .69 .2 .41 .41 .2 .65 .65 .65 .65 .65 .65 .65 .65 .65 .65 .65 .65 .65 .65"/>
<feFuncB type="discrete" tableValues=".87 .87 .87 .87 .87 .87 .87 .87 .87 .87 .87 .87 .87 .87 .87 .87 .87 .25 .46 .46 .46 .46 .25 .82 .82 .25 .87 .87 .87 .87 .87 .87 .87 .87 .87 .87 .87 .87 .87 .87"/>
</feComponentTransfer>
<feTurbulence type="fractalNoise" baseFrequency=".1" numOctaves="2" seed="4" result="w"/>
<feDisplacementMap in="SourceAlpha" in2="w" scale="9" xChannelSelector="R" yChannelSelector="G" result="a"/>
<feMorphology in="a" operator="dilate" radius="1" result="o"/>
<feFlood flood-color="#333a44"/><feComposite in2="o" operator="in" result="oo"/>
<feComposite in="c" in2="a" operator="in" result="cc"/>
<feMerge><feMergeNode in="oo"/><feMergeNode in="cc"/></feMerge>
</filter>
<clipPath id="sheet"><path d="M717 232H1427L1727 968Q1640 1006 1536 1032H608Q504 1006 417 968z"/></clipPath>
</defs>
</svg>

<header class="titlebar"><svg class="i16"><use href="#q"/></svg><span>*Projekt bez nazwy — QGIS</span>
<svg class="wbtn" viewBox="0 0 102 12"><path d="M1 6.500h10M47.500 3.500h6v6h-6zM49.500 3.500v-2h6v6h-2M91 1.500l9 9M100 1.500l-9 9" fill="none" stroke="#777"/></svg></header>
<nav class="menubar">
<span class="w1">Pro<u>j</u>ekt</span><span class="w2"><u>E</u>dycja</span><span class="w3"><u>W</u>idok</span><span class="w4">W<u>a</u>rstwa</span><span class="w5"><u>U</u>stawienia</span><span class="w6">W<u>t</u>yczki</span><span class="w7">Wekt<u>o</u>r</span><span class="w8"><u>R</u>aster</span><span class="w9"><u>B</u>azy danych</span><span class="w10">W <u>i</u>nternecie</span><span class="w11">Siatka</span><span class="w12">Pro<u>c</u>essing</span><span class="w13"><u>P</u>omoc</span>
</nav>
<div class="toolbar">
<i class="grip g0"></i><b><svg><use href="#new"/></svg></b><b><svg><use href="#open"/></svg></b><b><svg><use href="#save"/></svg></b><b><svg><use href="#layout"/></svg></b><b><svg><use href="#lmgr"/></svg></b><b><svg><use href="#style"/></svg></b><i class="grip"></i><b class="on"><svg><use href="#hand"/></svg></b><b><svg><use href="#pan"/></svg></b><b><svg><use href="#zin"/></svg></b><b><svg><use href="#zout"/></svg></b><b><svg><use href="#zfull"/></svg></b><b><svg><use href="#zsel"/></svg></b><b><svg><use href="#zlay"/></svg></b><b class="off"><svg><use href="#z11"/></svg></b><b><svg><use href="#zprev"/></svg></b><b class="off"><svg><use href="#znext"/></svg></b><b><svg><use href="#nmap"/></svg></b><b><svg><use href="#mesh"/></svg></b><b><svg><use href="#nbook"/></svg></b><b><svg><use href="#books"/></svg></b><b><svg><use href="#clock"/></svg></b><b><svg><use href="#refresh"/></svg></b><i class="grip"></i><b><svg><use href="#ident"/></svg></b><b><svg><use href="#table"/></svg></b><b><svg><use href="#abacus"/></svg></b><b><svg><use href="#gear"/></svg></b><b><svg><use href="#sigma"/></svg></b><b><svg><use href="#measure"/></svg></b><i class="dd"></i><b><svg><use href="#tip"/></svg></b><b class="off"><svg><use href="#action"/></svg></b><i class="dd off"></i><b><svg><use href="#text"/></svg></b><i class="dd"></i>
</div>
<div class="toolbar">
<i class="grip g0"></i><b><svg><use href="#dsrc"/></svg></b><b><svg><use href="#gpkgn"/></svg></b><b><svg><use href="#vnew"/></svg></b><b><svg><use href="#spn"/></svg></b><b><svg><use href="#chip"/></svg></b><i class="sep"></i><b><svg><use href="#vbox"/></svg></b><i class="sep"></i><i class="grip"></i><b class="off dim"><svg><use href="#pencils"/></svg></b><b><svg><use href="#pen"/></svg></b><b class="off"><svg><use href="#savee"/></svg></b><b class="off"><svg><use href="#addp"/></svg></b><b class="off"><svg><use href="#vtx"/></svg></b><i class="dd off"></i><b class="off"><svg><use href="#attr"/></svg></b><b class="off"><svg><use href="#trash"/></svg></b><b class="off"><svg><use href="#cut"/></svg></b><b class="off"><svg><use href="#copy"/></svg></b><b class="off"><svg><use href="#paste"/></svg></b><b class="off"><svg><use href="#undo"/></svg></b><b class="off"><svg><use href="#redo"/></svg></b><i class="grip"></i><b><svg><use href="#abc"/></svg></b><b><svg><use href="#diag"/></svg></b><i class="sep"></i><b><svg><use href="#abblue"/></svg></b><b><svg><use href="#abred"/></svg></b><i class="sep"></i><b class="off"><svg><use href="#abg1"/></svg></b><b class="off"><svg><use href="#abg2"/></svg></b><b class="off"><svg><use href="#abg3"/></svg></b><b class="off"><svg><use href="#abg4"/></svg></b><b class="off"><svg><use href="#abg5"/></svg></b><i class="grip"></i><b><svg><use href="#bino"/></svg></b><i class="grip"></i><b><svg><use href="#py"/></svg></b><i class="grip"></i><b><svg><use href="#help"/></svg></b><i class="grip"></i><b><svg><use href="#gstat"/></svg></b>
</div>
<div class="toolbar last">
<i class="grip g0"></i><b><svg><use href="#sel"/></svg></b><i class="dd"></i><b><svg><use href="#selv"/></svg></b><i class="dd"></i><b><svg><use href="#desel"/></svg></b><i class="dd"></i><b><svg><use href="#selloc"/></svg></b>
</div>

<main class="work">
<aside class="docks">
<section class="dock browser">
<h2>Przeglądarka<svg class="i11"><use href="#flo"/></svg><svg class="i11"><use href="#clo"/></svg></h2>
<div class="mini"><svg><use href="#addl"/></svg><svg><use href="#refresh"/></svg><svg><use href="#flt"/></svg><svg><use href="#coll"/></svg><svg><use href="#info"/></svg></div>
<ul class="tree">
<li><svg class="ar"></svg><svg><use href="#tstar"/></svg>Ulubione</li>
<li><svg class="ar"><use href="#right"/></svg><svg><use href="#books"/></svg>Zakładki przestrzenne</li>
<li><svg class="ar"><use href="#right"/></svg><svg><use href="#thome"/></svg>Home</li>
<li><svg class="ar"><use href="#right"/></svg><svg><use href="#tfold"/></svg>C:\</li>
<li><svg class="ar"><use href="#right"/></svg><svg><use href="#tfold"/></svg>D:\</li>
<li><svg class="ar"></svg><svg><use href="#gpkg"/></svg>GeoPackage</li>
<li><svg class="ar"></svg><svg><use href="#feather"/></svg>SpatiaLite</li>
<li><svg class="ar"></svg><svg><use href="#tpg"/></svg>PostGIS</li>
<li><svg class="ar"></svg><svg><use href="#tms"/></svg>MSSQL</li>
<li><svg class="ar"></svg><svg><use href="#tora"/></svg>Oracle</li>
<li><svg class="ar"></svg><svg><use href="#tdb2"/></svg>DB2</li>
<li><svg class="ar"></svg><svg><use href="#tglobe"/></svg>WMS/WMTS</li>
<li><svg class="ar"></svg><svg><use href="#tvt"/></svg>Vector Tiles</li>
<li><svg class="ar"><use href="#right"/></svg><svg><use href="#txyz"/></svg>XYZ Tiles</li>
<li><svg class="ar"></svg><svg><use href="#twcs"/></svg>WCS</li>
<li><svg class="ar"></svg><svg><use href="#twfs"/></svg>WFS / OGC API - Features</li>
<li><svg class="ar"></svg><svg><use href="#tows"/></svg>OWS</li>
<li><svg class="ar"></svg><svg><use href="#tarc"/></svg>ArcGIS Map Service</li>
<li><svg class="ar"></svg><svg><use href="#tarf"/></svg>ArcGIS Feature Service</li>
<li><svg class="ar"></svg><svg><use href="#tgn"/></svg>GeoNode</li>
</ul>
</section>
<div class="split"></div>
<section class="dock layers">
<h2>Warstwy<svg class="i11"><use href="#flo"/></svg><svg class="i11"><use href="#clo"/></svg></h2>
<div class="mini"><svg><use href="#brush"/></svg><svg><use href="#addgr"/></svg><svg><use href="#eye"/></svg><svg><use href="#flt"/></svg><svg><use href="#eps"/></svg><i class="dd"></i><svg><use href="#expa"/></svg><svg><use href="#coll"/></svg><svg><use href="#reml"/></svg></div>
<ul class="tree">
<li class="cur"><svg class="ar"><use href="#down"/></svg><svg class="ck"><use href="#chk"/></svg><svg><use href="#poly"/></svg><strong><u>trees</u></strong></li>
<li class="sw"><svg class="ck"><use href="#chk"/></svg><i class="mixed"></i>Mixed Trees</li>
<li class="sw"><svg class="ck"><use href="#chk"/></svg><i class="everg"></i>Evergreen</li>
<li class="sw"><svg class="ck"><use href="#chk"/></svg><i class="decid"></i>Deciduous</li>
<li class="sw"><svg class="ck"><use href="#chk"/></svg><i class="other"></i></li>
<li><svg class="ar"><use href="#down"/></svg><svg class="ck"><use href="#chk"/></svg><svg class="ra"><use href="#rast"/></svg><strong>SR_50M_alaska_nad</strong></li>
<li class="band"><i class="black"></i>52</li>
<li class="band"><i></i>251</li>
<li><svg class="ar"><use href="#right"/></svg><svg class="ck"><use href="#chk"/></svg><svg class="ra"><use href="#rast"/></svg><strong>landcover</strong></li>
<li><svg class="ar"></svg><svg class="ck"><use href="#chk"/></svg><svg viewBox="0 0 16 16"><circle cx="8" cy="8" r="2" fill="#7fa87b"/></svg><strong>climate</strong></li>
</ul>
</section>
</aside>
<section class="canvas">
<div class="banner">
<svg class="warn" viewBox="0 0 36 34"><path d="M18 2L34 31.500H2z" fill="none" stroke="#8a3a0a" stroke-width="2.600" stroke-linejoin="round" transform="translate(0 1)"/><path d="M18 2L34 31H2z" fill="#ffb901" stroke="#e8550a" stroke-width="2.200" stroke-linejoin="round"/><path d="M16 11q2-3 4 0l-1.300 11h-1.400z" fill="#8f4a08"/><circle cx="18" cy="26.500" r="2" fill="#8f4a08"/></svg>
<span class="big msg">Used a ballpark transform from EPSG:2964 to EPSG:4326</span>
<button class="big details">Szczegóły</button>
<svg class="bx" viewBox="0 0 42 42"><circle cx="21" cy="21" r="21" fill="#3d3000"/><path d="M13 13l16 16M29 13L13 29" stroke="#fff8e0" stroke-width="6.500" stroke-linecap="round"/></svg>
</div>
<svg class="map" viewBox="301 232 2258 800">
<path d="M323 232H1990V878H323z" fill="#4b9fd7"/>
<g clip-path="url(#sheet)">
<path d="M300 232H1760V1032H300z" fill="#c6c6c6"/>
<path d="M945 262L985 225H1150L1215 240L1290 262L1330 225H1440L1530 500H1290L1150 330L900 320z" fill="#000" filter="url(#reliefSoft)"/>
<path d="M700 222L722 232L735 275L756 288L768 308L782 325L802 335L816 360L826 380L815 400L735 400L722 372L698 356L692 335L670 325zM893 284L925 290L960 285L1030 310L1090 310L1160 290L1230 255L1310 275L1340 310L1375 360L1500 360V760L1450 710L1376 645V400H985L925 345L898 312z" fill="#000" filter="url(#reliefMid)"/>
<path d="M915 322L985 314L1050 328L1150 325L1165 290L1190 262L1260 255L1275 268L1250 290L1225 305L1150 350L1110 400H1010L985 372L930 340z" fill="#000" filter="url(#reliefHard)" opacity=".75"/>
<path d="M1310 300L1335 300L1350 400H1290z" fill="#000" filter="url(#reliefHard)" opacity=".35"/>
<path d="M1362 385L1400 372L1500 362V760L1455 715L1430 670L1360 640z" fill="#000" filter="url(#reliefHard)"/>
<g fill="#6ba6dd" stroke="#333a44" stroke-width="1.600" filter="url(#rough)">
<path d="M963 328l12-3 8 4 4-10 5-4 2 8 6 4 10 2 4 10-6 4-6-8-12-3-10 6-14 0z"/><path d="M1000 341l8 0 0 6-6 0zM980 355l8-6 8 6 4 4-6 4-4 12-16 2 4-14zM1006 358l6 0 4 10-6-2zM903 386l10-5 3 7-12 3zM1034 331l8 2-3 5zM1066 346l10 4-3 5zM1089 338l6 0-2 6zM1186 325l10-1-4 8zM1170 345l12-5 4 8-14 4z"/></g>
<g filter="url(#veg)"><path d="M1252 300L1270 400H1142L1148 378L1168 366L1146 360L1170 348L1186 338L1198 322L1224 314L1234 318L1236 306z"/></g>
<g fill="#6ba6dd" stroke="#333a44" stroke-width="1.600" filter="url(#rough)"><path d="M988 400l6-18 18-14 30 4 24-2 22-8 18 0 8 8 16-4-10 10 6 12-8 14z"/><path d="M1232 330l16-24 8 34-16 6zM1200 332l24-12 4 12-34 18z"/></g>
<g fill="#d06bd0" stroke="#333a44" stroke-width="1.300" filter="url(#rough)"><path d="M1078 396l6-10 10-4 2-14 8 4 4 24z"/><path d="M1040 394l10-4 4 8zM1180 352l26-8-6 8-18 6zM1190 380l18 2 6 10-20-2z"/></g>
<g fill="#eeb075" stroke="#333a44" stroke-width="1.300" filter="url(#rough)"><path d="M1090 378l10 0 2 10-10 2zM1106 366l16-2-8 4zM1026 394l2-10 8 12zM1096 336l8-4 1 6zM1146 362l22-6 12 6-30 4zM1150 374l28-10 14 10-10 16-32 8zM1206 352l20-6 4 12-18 8z"/>
<path d="M1416 652l6 0 1 6-6 0zM1424 662l8-4 8 3 4 8-10 2 8 10-8 2-11-10-5-6zM1446 686l8 0 2 10-6-5z"/></g>
<g fill="#cf5fd2" stroke="#333a44" stroke-width="1.300" filter="url(#rough)"><path d="M1447 650l8 6 6 8 8 6 8 12-8 2-9-8-7-12zM1464 652l9 12-3 1-8-10zM1478 666l7 0 4 7-7 0zM1427 648l5 2-2 4zM1465 686l7-2-2 8zM1474 702l10-6 8 2v30l-10-8 0-12zM1482 690l20-8v20l-8-8zM1486 678l8 0 0 6-6 0z"/></g>
</g>
</svg>
</section>
</main>

<footer class="status">
<div class="search"><svg viewBox="0 0 24 24"><circle cx="10" cy="9.500" r="8.500" fill="none" stroke="#8a8a8a" stroke-width="2"/><path d="M16 16l7 7" stroke="#8a8a8a" stroke-width="2.600"/></svg><span class="big">Szukana fraza (Ctrl+K)</span></div>
<div class="sb">
<span class="big c1">Współrzędne</span><span class="fld big f1">2191911,7230533</span>
<svg class="mouse" viewBox="0 0 16 20"><path d="M3 8c2-3 7-1 9 3s1 7-2 7-5-1-6-4-2-4-1-6z" fill="#eee" stroke="#333" stroke-width="1.300"/><path d="M1 1l6 8M8 1l2 7M12 6l4-5M2 5l6 8" stroke="#333" stroke-width="1.300"/></svg>
<span class="big c2">Skala</span><span class="fld big f2">1:11032460<i class="cb"></i></span>
<svg class="lock" viewBox="0 0 16 18"><path d="M4 8V5a4 4 0 0 1 8 0v3" fill="none" stroke="#999" stroke-width="2"/><rect x="1.500" y="8" width="13" height="9" rx="2" fill="#555"/></svg>
<span class="big c3">Powiększenie</span><span class="fld big f3">100%<i class="sp"></i></span>
<span class="big c4">Obrót</span><span class="fld big f4">0,0 °<i class="sp"></i></span>
<svg class="rck"><use href="#chk"/></svg><span class="big c5">Renderuj</span>
<svg class="gl1" viewBox="0 0 16 16"><circle cx="8" cy="7" r="6.500" fill="#777"/><path d="M8 .5v13M2 5h12M2 9h12M8 .5c-4 3-4 10 0 13M8 .5c4 3 4 10 0 13" fill="none" stroke="#ddd" stroke-width=".7"/><path d="M8 13v3M4 15.500h8" stroke="#777"/></svg><span class="big c6">EPSG:2964</span>
<svg class="bub" viewBox="0 0 18 18"><path d="M9 1c11 0 11 11 4 12.500l1 4-5-4C-2 13.500-2 1 9 1z" fill="#555"/><path d="M5 7.500h2M8.200 7.500h2M11.500 7.500h2" stroke="#fff" stroke-width="1.500"/></svg>
</div>
</footer>
<div class="tail"><i class="t1"></i><i class="t2"></i><i class="t3"></i></div>

<section class="win files">
<div class="ftitle"><svg class="fo"><use href="#fold"/></svg><i class="bar"></i><svg class="fd" viewBox="0 0 12 14"><path d="M.5 .5h8l3 3v10H.5z" fill="#f4f4f4" stroke="#bbb"/><path d="M3 7.500l2.500 3L9.500 5" fill="none" stroke="#e8601c" stroke-width="1.500"/></svg><svg class="fo"><use href="#fold"/></svg><svg class="qd" viewBox="0 0 8 8"><path d="M0 1h8M0 3h8L4 7.500z" fill="#000" stroke="#ccc" stroke-width=".8"/></svg><i class="bar"></i><span>cw5</span>
<svg class="fw" viewBox="0 0 102 12"><path d="M0 6.500h10M45.500 1.500h9v9h-9zM91 1l10 10M101 1L91 11" fill="none" stroke="#fff" stroke-width="1.100"/></svg></div>
<div class="tabs"><span class="plik">Plik</span><span class="tb1">Narzędzia główne</span><span class="tb2">Udostępnianie</span><span class="tb3">Widok</span><svg class="rib" viewBox="0 0 32 16"><path d="M1 6l3.500 3.500L8 6" fill="none" stroke="#999" stroke-width="1.200"/><circle cx="24" cy="8" r="7.300" fill="#0a78d7"/><text x="21.300" y="12.200" class="gl hq">?</text></svg></div>
<div class="addr"><svg class="nav" viewBox="0 0 92 14"><path d="M13 7H2M6.500 2.500L2 7l4.500 4.500" fill="none" stroke="#666" stroke-width="1.500"/><path d="M31 7h11M37.500 2.500L42 7l-4.500 4.500" fill="none" stroke="#ccc" stroke-width="1.500"/><path d="M57.500 5.500L60 8l2.500-2.500" fill="none" stroke="#777" stroke-width="1.400"/><path d="M80.500 13.500V2M75.500 7l5-5 5 5" fill="none" stroke="#555" stroke-width="1.500"/></svg>
<div class="path"><svg class="fo"><use href="#fold"/></svg><em></em><span class="p1">Ten komputer</span><em></em><span class="p2">Pulpit</span><em></em><span class="p3">BazyDanych</span><em></em><span>cw5</span><svg class="pr" viewBox="0 0 46 30"><path d="M-.5 12.500l4 4 4-4" fill="none" stroke="#666" stroke-width="1.800"/><path d="M15.500 0v30" stroke="#d9d9d9"/><path d="M34.500 12.500a4.200 4.200 0 1 1-5-.2M27 11h4v4" fill="none" stroke="#666" stroke-width="1.500"/></svg></div>
<div class="find"><svg viewBox="0 0 12 12"><circle cx="7.500" cy="4.500" r="3.800" fill="none" stroke="#999"/><path d="M4.800 7.200L.5 11.500" stroke="#999"/></svg>Przeszukaj: cw5</div></div>
<div class="fbody">
<ul class="side">
<li class="top"><svg><use href="#eqs"/></svg>Szybki dostęp</li>
<li class="top"><svg><use href="#edb"/></svg>Dropbox</li>
<li class="top"><svg><use href="#epc"/></svg>Ten komputer</li>
<li><svg><use href="#edoc"/></svg>Dokumenty</li>
<li><svg><use href="#emus"/></svg>Muzyka</li>
<li><svg><use href="#e3d"/></svg>Obiekty 3D</li>
<li><svg><use href="#epic"/></svg>Obrazy</li>
<li><svg><use href="#edl"/></svg>Pobrane</li>
<li class="cur"><svg><use href="#edk"/></svg>Pulpit</li>
<li><svg><use href="#evid"/></svg>Wideo</li>
<li><svg><use href="#eosc"/></svg>OS (C:)</li>
<li><svg><use href="#edrv"/></svg>Nowy (D:)</li>
<li class="top net"><svg><use href="#enet"/></svg>Sieć</li>
</ul>
<div class="flist">
<svg class="caret" viewBox="0 0 8 5"><path d="M.5 4.500L4 1l3.500 3.500" fill="none" stroke="#666"/></svg>
<div class="fh"><span>Nazwa</span><span class="dm">Data modyfikacji</span></div>
<div class="fr"><svg viewBox="0 0 12 14"><path d="M.5 .5h11v13H.5z" fill="#fff" stroke="#999"/><path d="M2 3.500h8v7H2z" fill="#2a7fd0"/><path d="M2 10.500l3-4 2 2 1-1 2 3z" fill="#123f73"/></svg><span>1_1.PNG</span><span class="dt">23.11.2020</span></div>
<div class="hs"><svg viewBox="0 0 17 15"><path d="M11 3.500L7 7.500l4 4" fill="none" stroke="#444" stroke-width="2"/></svg><i></i><svg class="r" viewBox="0 0 17 15"><path d="M6 3.500l4 4-4 4" fill="none" stroke="#444" stroke-width="2"/></svg></div>
</div>
</div>
<div class="fstat"><span>1 element</span><svg class="v1" viewBox="0 0 21 23"><path d="M.5 .5h20v22H.5z" fill="#cce8f6" stroke="#26a0da"/><path d="M3.500 5.500h3v3h-3zM3.500 10h3v3h-3zM3.500 14.500h3v3h-3z" fill="#fff" stroke="#777" stroke-width=".8"/><path d="M9 7h4M15 7h4M9 11.500h4M15 11.500h4M9 16h4M15 16h4" stroke="#777"/></svg><svg class="v2" viewBox="0 0 14 11"><path d="M.5 .5h13v10H.5z" fill="#fff" stroke="#888"/><path d="M2 2h10v7H2z" fill="#7db4e8"/><path d="M2 6c4-1 6 1 10 0v3H2z" fill="#2f6050"/></svg></div>
</section>

<section class="win stats">
<div class="stitle"><svg class="i16"><use href="#q"/></svg><span>Group Stats</span><svg class="sw3" viewBox="0 0 102 12"><path d="M0 6.500h10M45.500 1.500h9v9h-9zM91 1l10 10M101 1L91 11" fill="none" stroke="#888"/></svg></div>
<div class="smenu"><span><u>D</u>ata</span><span>Feat<u>u</u>res</span><span>W<u>i</u>ndow</span><span>Hel<u>p</u></span></div>
<div class="sbody">
<div class="grid">
<table><tr><th class="h1" colspan="2">1<svg viewBox="0 0 8 4"><path d="M0 4h8L4 0z" fill="#444"/></svg></th><th class="h2">2</th></tr>
<tr><th class="rh">1<small>-</small></th><td class="pk"><strong>VEGDESC</strong></td><td class="pk"></td></tr>
<tr><th class="rh">2</th><td class="pk">Deciduous</td><td>165378</td></tr>
<tr><th class="rh">3</th><td class="pk">Evergreen</td><td>164579</td></tr>
<tr><th class="rh">4</th><td class="pk">Mixed Trees</td><td>189273</td></tr></table>
<div class="gut"></div>
</div>
<i class="vsplit"></i>
<div class="panel">
<h2>Control panel<svg class="i11"><use href="#flo"/></svg><svg class="i11"><use href="#clo"/></svg></h2>
<div class="form">
<label class="big l1">Layers</label>
<div class="combo big">trees<svg viewBox="0 0 8 6"><path d="M0 0h8L4 6z" fill="#555"/></svg></div>
<label class="big l2">Fields</label>
<div class="fields"><ul>
<li><svg><use href="#pie"/></svg>AREA_KM2</li><li><svg><use href="#pie"/></svg>cat</li><li><svg><use href="#doc"/></svg>F_CODE</li><li><svg><use href="#doc"/></svg>F_CODEDESC</li><li><svg><use href="#pie"/></svg>VEG_ID</li><li class="cur"><svg><use href="#docb"/></svg>VEGDESC</li><li><svg><use href="#earth"/></svg>Area</li><li><svg><use href="#earth"/></svg></li></ul>
<div class="vs"><i class="up"></i><i class="th"></i><i class="dn"></i></div></div>
<div class="row r1"><button class="big flt">Filter</button><span class="big">Columns</span></div>
<div class="row boxes"><ul></ul><ul></ul></div>
<div class="row r2"><span class="big a">Rows</span><span class="big b">Value</span><svg class="ck"><use href="#box"/></svg><span class="big c">use NULL values</span></div>
<div class="row boxes"><ul><li><svg><use href="#doc"/></svg>VEGDESC</li></ul><ul><li><svg><use href="#pie"/></svg>AREA_KM2</li><li><svg><use href="#bars"/></svg>sum</li></ul></div>
<div class="row r3"><svg class="ck"><use href="#box"/></svg><span class="big">Use only selected features</span><button class="big clr">Clear</button></div>
<button class="big calc">Calculate</button>
</div>
</div>
</div>
<svg class="sizer" viewBox="0 0 12 12"><path d="M10 1h1M10 4h1M10 7h1M10 10h1M7 4h1M7 7h1M7 10h1M4 7h1M4 10h1M1 10h1" stroke="#aaa"/></svg>
</section>
</body>
</html>
```
FILE: styles.css
```css
* { box-sizing: border-box; }
body { margin: 0; width: 2560px; height: 1080px; overflow: hidden; background: #efefef; color: #000; font: 11.5px/16px "Open Sans", "Noto Sans", sans-serif; letter-spacing: -.18px; display: flex; flex-direction: column; position: relative; }
svg { display: block; flex: none; }
ul { list-style: none; margin: 0; padding: 0; }
u { text-underline-offset: 2px; text-decoration-thickness: 1px; }
h2 { margin: 0; font-size: inherit; font-weight: 400; }
strong { font-weight: 700; }
button { font-family: inherit; color: #000; padding: 0; border: 1px solid #a9a9a9; border-radius: 3px; background: linear-gradient(#fff, #eee); text-align: center; }
.defs { position: absolute; }
.big { font-size: 26.5px; line-height: 36px; letter-spacing: -.6px; white-space: nowrap; }
.i16 { width: 16px; height: 16px; }
.i11 { width: 11px; height: 11px; }

.gl { font-family: "Open Sans", sans-serif; letter-spacing: 0; font-weight: 600; fill: #333; }
.gl.a { font-size: 13px; }
.gl.s7 { font-size: 8px; font-weight: 700; }
.gl.inf { font: italic 700 15px "Liberation Serif", serif; fill: #fff; }
.gl.inf2 { font: italic 700 12px "Liberation Serif", serif; fill: #fff; }
.gl.tt { font: 700 16px "Liberation Serif", serif; }
.gl.abc { font-size: 9.5px; font-weight: 700; letter-spacing: -.4px; fill: #222; }
.gl.red { fill: #e00; }
.gl.gr { fill: #888; }
.gl.qm { font: 700 14px "Liberation Serif", serif; fill: #fff; }
.gl.db { font-size: 7px; fill: #e5eef8; }
.gl.hq { font-size: 11px; font-weight: 700; fill: #fff; }

.titlebar { height: 23px; background: #fff; display: flex; align-items: center; padding: 0 20px 0 0; color: #8a8a8a; }
.titlebar .i16 { margin: 0 6px 2px 1px; }
.titlebar .wbtn { width: 102px; height: 12px; margin: 0 0 3px auto; }
.menubar { height: 20px; border-bottom: 1px solid #d2d2d2; padding-left: 10px; display: flex; align-items: center; color: #999; white-space: nowrap; }
.w1 { width: 51px; } .w2, .w3 { width: 48px; } .w4 { width: 59px; } .w5 { width: 71px; } .w6 { width: 55px; } .w7 { width: 52px; } .w8 { width: 46px; } .w9, .w10 { width: 80px; } .w11 { width: 45px; } .w12 { width: 71px; }

.toolbar { height: 39px; display: flex; align-items: center; border-bottom: 1px solid #b7b7b7; background: linear-gradient(#f9f9f9, #eee); }
.toolbar.last { height: 38px; }
.toolbar b { width: 33px; height: 32px; display: grid; place-items: center; }
.toolbar b svg { width: 24px; height: 24px; }
.toolbar b.on { background: #dcdcdc; border: 1px solid #aaa; border-radius: 3px; }
.toolbar .off { opacity: .5; }
.toolbar .dim { opacity: .75; }
.grip { width: 16px; height: 18px; background: radial-gradient(circle, #b0b0b0 .8px, transparent 1px) 5px 0 / 4px 3px repeat; background-clip: content-box; padding: 0 3px 0 5px; }
.grip.g0 { width: 12.5px; padding: 0 4px 0 4px; }
.dd { width: 11.7px; display: grid; place-items: center; }
.dd::after { content: ""; border: 4px solid transparent; border-top: 5px solid #555; border-bottom: 0; }
.sep { width: 7px; height: 28px; border-right: 1px solid #c9c9c9; }

.work { height: 874px; display: flex; }
.docks { width: 300px; display: flex; flex-direction: column; }
.dock { width: 294px; display: flex; flex-direction: column; }
.browser { height: 478px; }
.layers { flex: 1; }
.dock h2 { height: 38px; display: flex; align-items: center; gap: 3px; padding: 0 2px 2px 4px; }
.dock h2 .i11:first-of-type { margin-left: auto; }
.layers h2 { height: 25px; padding-bottom: 0; }
.mini { height: 29px; display: flex; align-items: center; gap: 9px; padding: 0 0 3px 8px; }
.mini svg { width: 16px; height: 16px; }
.mini .dd { width: 10px; margin: 0 -6px 0 -5px; }
.layers .mini { height: 35px; padding-bottom: 0; padding-top: 4px; }
.tree { flex: 1; border: 1px solid #b0b0b0; background: #fff; padding-top: 1px; overflow: hidden; }
.tree li { height: 18px; display: flex; align-items: center; padding-left: 2px; white-space: nowrap; line-height: 18px; }
.tree li svg { width: 16px; height: 16px; margin-right: 6px; }
.tree li svg.ar { margin-right: 5px; }
.tree li svg.ck { width: 14px; height: 14px; }
.tree li svg.ra { width: 14px; height: 14px; margin: 0 7px 0 1px; }
.layers .tree strong { font-size: 12px; letter-spacing: -.45px; padding-top: 2px; }
.layers .tree .cur { background: #efefef; height: 17px; }
.tree li.sw { height: 38px; padding-left: 43px; }
.tree li.sw i { width: 38px; height: 38px; border: 1px solid rgba(60, 50, 50, .6); margin-right: 6px; }
.mixed { background: #eeb27a; } .everg { background: #d06bd2; } .decid { background: #6ca6dc; } .other { background: #20d51d; }
.tree li.band { padding-left: 43px; }
.band i { width: 16px; height: 16px; margin-right: 7px; }
.black { background: #000; }
.split { height: 12px; background: repeating-linear-gradient(90deg, #aaa 0 1px, transparent 1px 3px) 140px 3px / 17px 1px no-repeat; }

.canvas { flex: 1; border: 1px solid #b0b0b0; border-top: 0; background: #fff; display: flex; flex-direction: column; margin: 1px 0 0; }
.banner { height: 72px; margin-left: -1px; margin-right: -1px; background: #ffc800; border: 1px solid #e0a500; display: flex; align-items: flex-start; padding: 14px 51px 0 24px; }
.warn { width: 36px; height: 34px; margin-top: 5px; }
.msg { margin: -1px auto 0 11px; letter-spacing: -.27px; }
.details { width: 123px; height: 42px; margin-right: 40px; line-height: 36px; letter-spacing: -.85px; }
.bx { width: 42px; height: 42px; margin-top: -1px; }
.map { width: 2258px; height: 800px; }

.status { height: 38px; display: flex; overflow: hidden; padding-left: 4px; }
.search { width: 483px; height: 50px; margin-top: 3px; border: 1px solid #a9a9a9; border-radius: 3px; background: #fff; display: flex; align-items: flex-start; color: #777; }
.search svg { width: 25px; height: 25px; margin: 6px 9px 0 14px; }
.search .big { margin-top: 2px; letter-spacing: -.2px; }
.sb { flex: 1; display: flex; align-items: flex-start; margin-left: 592px; }
.sb > .big { margin-top: 6px; flex: none; letter-spacing: -1.05px; }
.sb .fld { margin-top: 5px; height: 50px; line-height: 35px; border: 1px solid #a9a9a9; border-radius: 3px; background: #fff; padding-left: 5px; display: flex; }
.c1 { width: 147px; } .f1 { width: 217px; }
.mouse { width: 16px; height: 20px; margin: 14px 13px 0 5px; }
.c2 { width: 61px; }
.sb .f2 { width: 159px; margin-top: 3px; padding: 2px 0 0 1px; letter-spacing: -1.100px; }
.lock { width: 16px; height: 18px; margin: 15px 8px 0 10px; }
.c3 { width: 148px; } .f3 { width: 133px; } .sb .f3, .sb .f4 { margin-top: 4px; padding-top: 1px; }
.c4 { width: 71px; margin-left: 10px; } .f4 { width: 128px; }
.cb, .sp { width: 21px; height: 50px; margin: -3px 0 0 auto; border-left: 1px solid #b5b5b5; position: relative; }
.sp { width: 14px; }
.cb::after { content: ""; position: absolute; left: 6px; top: 19px; border: 4px solid transparent; border-top: 6px solid #555; border-bottom: 0; }
.sp::before { content: ""; position: absolute; left: 3px; top: 11px; border: 4px solid transparent; border-bottom: 5px solid #555; border-top: 0; }
.sp::after { content: ""; position: absolute; left: 3px; top: 29px; border: 4px solid transparent; border-top: 5px solid #555; border-bottom: 0; }
.rck { width: 14px; height: 14px; margin: 17px 6px 0 7px; }
.c5 { width: 116px; }
.gl1 { width: 16px; height: 16px; margin: 17px 5px 0 0; }
.c6 { width: 152px; }
.bub { width: 18px; height: 18px; margin-top: 17px; }
.tail { height: 9px; background: #f0f0f0; display: flex; align-items: flex-start; }
.t1 { margin-left: 48px; width: 343px; height: 7px; background: #fff; border: 1px solid #ccc; }
.t2 { margin-left: 688px; width: 48px; height: 7px; background: #f8f8f8; }
.t3 { margin: 6px 0 0 1336px; width: 24px; height: 2px; background: repeating-linear-gradient(90deg, #222 0 3px, transparent 3px 6px); }

.win { position: absolute; display: flex; flex-direction: column; }
.files { left: 440px; top: 392px; width: 936px; height: 545px; border: 2px solid #3a3a3a; border-top: 0; background: #fff; box-shadow: 0 6px 22px rgba(0, 0, 0, .4); letter-spacing: -.05px; }
.ftitle { height: 31px; background: #3a3a3a; color: #fff; display: flex; align-items: center; padding-left: 14px; }
.fo { width: 12px; height: 14px; }
.bar { width: 3px; height: 12px; border: 1px solid #777; border-width: 0 1px; margin: 0 10px 0 8px; }
.fd { width: 12px; height: 14px; margin-right: 10px; }
.qd { width: 8px; height: 8px; margin-left: 9px; }
.ftitle .qd + .bar { margin: 0 6px 0 7px; }
.fw { width: 102px; height: 12px; margin: 0 17px 0 auto; }
.tabs { height: 24px; display: flex; align-items: center; border-bottom: 1px solid #dadbdc; color: #333; line-height: 23px; }
.tabs .plik { width: 56px; background: #0063b1; color: #fff; text-align: center; height: 23px; }
.tb1 { margin-left: 14px; width: 121px; } .tb2 { width: 105px; }
.rib { width: 32px; height: 16px; margin: 0 3px 0 auto; }
.addr { height: 42px; display: flex; align-items: center; padding: 0 12px 0 12px; }
.nav { width: 92px; height: 14px; }
.path { width: 460px; height: 31px; border: 1px solid #d9d9d9; margin: 0 12px 0 2px; display: flex; align-items: center; padding-left: 4px; }
.path em { width: 22px; height: 8px; display: grid; place-items: center; }
.path em::after { content: ""; width: 5px; height: 5px; border: solid #777; border-width: 1.500px 1.500px 0 0; transform: rotate(45deg); }
.p1, .p2, .p3 { white-space: nowrap; }
.path .pr { width: 46px; height: 30px; margin-left: auto; overflow: visible; }
.find { flex: 1; height: 31px; border: 1px solid #d9d9d9; display: flex; align-items: center; color: #6d6d6d; padding-left: 14px; }
.find svg { width: 12px; height: 12px; margin-right: 14px; }
.fbody { flex: 1; display: flex; min-height: 0; }
.side { width: 159px; border-right: 1px solid #eee; padding-top: 16px; }
.side li { height: 24px; display: flex; align-items: center; padding-left: 33px; width: 156px; }
.side li svg { width: 15px; height: 14px; margin-right: 5px; }
.side .top { height: 24px; padding-left: 25px; margin-bottom: 8px; }
.side .top:nth-child(3) { margin-bottom: 0; }
.side .net { margin-top: 8px; }
.side .cur { background: #d9d9d9; }
.flist { flex: 1; display: flex; flex-direction: column; position: relative; overflow: hidden; }
.caret { position: absolute; left: 360px; top: 0; width: 8px; height: 5px; }
.fh, .fr { display: flex; align-items: center; height: 25px; white-space: nowrap; padding-left: 18px; margin-top: 0; color: #4c607a; }
.dm { margin-left: auto; width: 59px; flex: none; height: 25px; line-height: 25px; border-left: 1px solid #e3e3e3; padding-left: 6px; overflow: hidden; }
.fr { margin-top: 4px; color: #000; padding-left: 20px; }
.fr svg { width: 12px; height: 14px; margin-right: 7px; }
.dt { margin-left: auto; width: 52px; overflow: hidden; color: #777; letter-spacing: -.5px; }
.hs { margin-top: auto; height: 15px; background: #f0f0f0; display: flex; }
.hs svg { width: 17px; height: 15px; }
.hs i { width: 350px; background: #cdcdcd; }
.hs .r { margin-left: auto; }
.fstat { height: 24px; display: flex; align-items: center; padding: 0 8px 0 14px; color: #1e395b; }
.v1 { width: 21px; height: 23px; margin-left: auto; }
.v2 { width: 14px; height: 11px; margin-left: 4px; }

.stats { left: 1489px; top: 192px; width: 803px; height: 781px; background: #efefef; border: 1px solid #8e8e8e; border-top-color: #caa000; box-shadow: 0 5px 20px rgba(0, 0, 0, .42); }
.stitle { height: 29px; background: #fff; display: flex; align-items: center; padding: 0 18px 1px 8px; color: #8f8f8f; }
.stitle span { margin-left: 5px; }
.stitle .i16 { margin-bottom: 2px; }
.sw3 { width: 102px; height: 12px; margin: 0 0 2px auto; }
.smenu { height: 20px; border-bottom: 1px solid #d2d2d2; display: flex; align-items: center; gap: 14px; padding-left: 10px; color: #999; }
.sbody { flex: 1; display: flex; padding: 9px 10px 0 9px; }
.grid { width: 337px; height: 689px; border: 1px solid #b0b0b0; background: #fff; display: flex; flex-direction: column; }
.grid table { border-collapse: separate; border-spacing: 0; width: 335px; flex: none; background: linear-gradient(#efefef 19px, #fff 19px); letter-spacing: -.18px; }
.grid tr { height: 37px; display: flex; }
.grid tr:first-child { height: 19px; }
.grid th, .grid td { display: flex; align-items: center; padding: 1px 0 0; border: solid #c5c5c5; border-width: 0 1px 1px 0; font-weight: 400; }
.grid .h1, .grid .h2 { background: linear-gradient(#fff, #ececec); justify-content: center; border-color: #c0c0c0 #c0c0c0 #a5a5a5; }
.grid .h1 { width: 80px; position: relative; }
.h1 svg { position: absolute; right: 4px; top: 6px; width: 8px; height: 4px; }
.grid .h2 { width: 43px; }
.grid .rh { width: 11px; background: linear-gradient(#fff, #ececec); justify-content: center; flex-direction: column; line-height: 12px; border-color: #a5a5a5; }
.rh small { font-size: 9px; line-height: 12px; margin-bottom: -8px; }
.grid td { width: 43px; padding: 1px 0 0 3px; background: #fff; }
.grid td:nth-child(2) { width: 69px; white-space: nowrap; }
.grid td.pk { background: #f5eaea; }
.gut { width: 11px; flex: 1; background: #efefef; }
.vsplit { width: 1px; height: 17px; align-self: center; margin: 0 7px 0 12px; background: repeating-linear-gradient(#aaa 0 1px, transparent 1px 3px); }
.panel { flex: 1; margin-left: -1px; }
.panel h2 { display: flex; align-items: center; gap: 3px; height: 18px; margin-right: -7px; letter-spacing: -.1px; }
.panel h2 .i11:first-of-type { margin-left: auto; }
.form { padding: 17px 0 0 4px; display: flex; flex-direction: column; }
.l1 { height: 39px; padding-left: 1px; }
.combo { height: 41px; width: 421px; border: 1px solid #a9a9a9; border-radius: 3px; background: linear-gradient(#fff, #ececec); display: flex; align-items: center; justify-content: space-between; padding: 3px 7px 0 5px; }
.combo svg { width: 8px; height: 6px; margin-top: -4px; }
.l2 { height: 45px; padding: 5px 0 0 1px; }
.fields { height: 192px; width: 421px; border: 1px solid #b0b0b0; background: #fff; display: flex; overflow: hidden; }
.fields ul { flex: 1; }
.form li { height: 26px; display: flex; align-items: center; padding-left: 4px; letter-spacing: -.25px; white-space: nowrap; }
.form li svg { width: 22px; height: 23px; margin-right: 7px; }
.form li.cur { background: #efefef; }
.vs { width: 14px; border-left: 1px solid #b0b0b0; display: flex; flex-direction: column; background: #e6e6e6; }
.vs i { background: #f8f8f8; border-bottom: 1px solid #b0b0b0; display: grid; place-items: center; }
.vs .up { height: 14px; } .vs .th { height: 67px; } .vs .dn { height: 14px; margin-top: auto; border: 0; border-top: 1px solid #b0b0b0; }
.vs .up::after { content: ""; border: 4px solid transparent; border-bottom: 4px solid #444; border-top: 0; }
.vs .dn::after { content: ""; border: 4px solid transparent; border-top: 4px solid #444; border-bottom: 0; }
.row { display: flex; }
.r1 { margin-top: 6px; height: 46px; }
.r1 span { margin: 3px 0 0 49px; }
.flt { width: 83px; height: 40px; line-height: 38px; }
.boxes { gap: 6px; height: 70px; }
.boxes ul { width: 126px; height: 70px; border: 1px solid #b0b0b0; background: #fff; }
.boxes ul + ul { width: 256px; }
.ck { width: 14px; height: 14px; }
.r2 { height: 51px; padding-top: 8px; }
.r2 .a { width: 132px; padding-left: 1px; } .r2 .b { width: 71px; }
.r2 .ck { margin: 10px 6px 0 0; }
.r3 { width: 421px; height: 53px; padding-top: 6px; }
.r3 .ck { margin: 13px 6px 0 0; }
.r3 .big { margin-top: 3px; }
.r3 .clr { width: 80px; height: 41px; margin: 0 0 0 auto; line-height: 38px; }
.calc { width: 421px; height: 41px; line-height: 38px; }
.sizer { position: absolute; right: 2px; bottom: 3px; width: 12px; height: 12px; }
```
